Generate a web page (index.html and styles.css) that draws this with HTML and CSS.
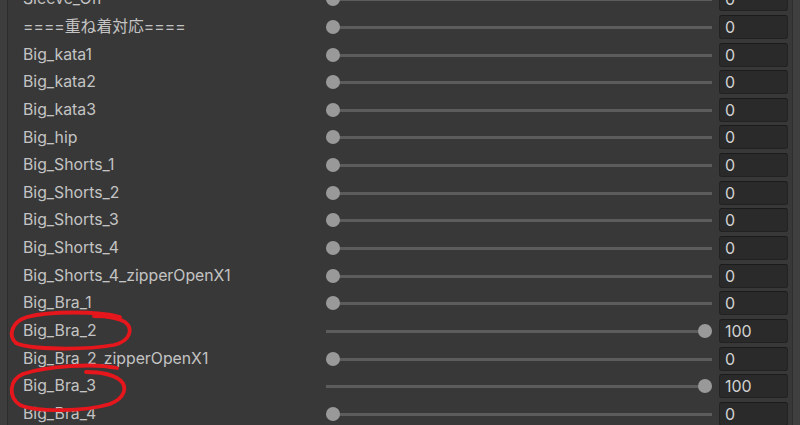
FILE: index.html
```html
<!DOCTYPE html>
<html lang="ja">

<head>
    <meta charset="UTF-8">
    <meta name="viewport" content="width=device-width, initial-scale=1.0">
    <title>Blend Shapes</title>
    <link rel="stylesheet" href="styles.css">
</head>

<body>
    <div class="inspector">
        <div class="gutter"></div>

        <div class="panel">
            <div class="list">
                <div class="row"><span class="label">Sleeve_Off</span><div class="slider"><span class="thumb"></span></div><div class="field">0</div></div>
                <div class="row"><span class="label">====重ね着対応====</span><div class="slider"><span class="thumb"></span></div><div class="field">0</div></div>
                <div class="row"><span class="label">Big_kata1</span><div class="slider"><span class="thumb"></span></div><div class="field">0</div></div>
                <div class="row"><span class="label">Big_kata2</span><div class="slider"><span class="thumb"></span></div><div class="field">0</div></div>
                <div class="row"><span class="label">Big_kata3</span><div class="slider"><span class="thumb"></span></div><div class="field">0</div></div>
                <div class="row"><span class="label">Big_hip</span><div class="slider"><span class="thumb"></span></div><div class="field">0</div></div>
                <div class="row"><span class="label">Big_Shorts_1</span><div class="slider"><span class="thumb"></span></div><div class="field">0</div></div>
                <div class="row"><span class="label">Big_Shorts_2</span><div class="slider"><span class="thumb"></span></div><div class="field">0</div></div>
                <div class="row"><span class="label">Big_Shorts_3</span><div class="slider"><span class="thumb"></span></div><div class="field">0</div></div>
                <div class="row"><span class="label">Big_Shorts_4</span><div class="slider"><span class="thumb"></span></div><div class="field">0</div></div>
                <div class="row"><span class="label">Big_Shorts_4_zipperOpenX1</span><div class="slider"><span class="thumb"></span></div><div class="field">0</div></div>
                <div class="row"><span class="label">Big_Bra_1</span><div class="slider"><span class="thumb"></span></div><div class="field">0</div></div>
                <div class="row"><span class="label">Big_Bra_2</span><div class="slider"><span class="thumb full"></span></div><div class="field">100</div></div>
                <div class="row"><span class="label">Big_Bra_2_zipperOpenX1</span><div class="slider"><span class="thumb"></span></div><div class="field">0</div></div>
                <div class="row"><span class="label">Big_Bra_3</span><div class="slider"><span class="thumb full"></span></div><div class="field">100</div></div>
                <div class="row"><span class="label">Big_Bra_4</span><div class="slider"><span class="thumb"></span></div><div class="field">0</div></div>
            </div>
        </div>

        <div class="scrollbar"></div>

        <!-- hand-drawn marks on top of the screenshot -->
        <svg class="marks" width="800" height="425" viewBox="0 0 800 425">
            <path d="M120 317 C98 311 50 311 27 317 C11 322 8 336 16 343 C30 350 86 350 114 345 C130 341 134 329 125 322 C117 317 104 316 94 316" />
            <path d="M117 368 C94 363 46 366 23 374 C9 380 8 397 20 405 C36 412 84 412 110 404 C125 398 128 387 120 380 C112 374 98 372 86 372" />
        </svg>
    </div>
</body>

</html>
```

FILE: styles.css
```css
html, body {
    margin: 0;
    padding: 0;
}

body {
    width: 800px;
    height: 425px;
    overflow: hidden;
    background-color: #383838;
    font-family: Inter, "Noto Sans CJK JP", sans-serif;
    font-size: 16px;
}

.inspector {
    position: relative;
    display: flex;
    height: 425px;
}

.gutter {
    width: 7px;
    background-color: #3d3d3d;
    border-right: 1px solid #2c2c2c;
}

.panel {
    width: 784px;
    padding-left: 15px;
    box-sizing: border-box;
    overflow: hidden;
}

.list {
    margin-top: -14.6px;
}

.row {
    display: grid;
    grid-template-columns: 296px 386px 69px;
    column-gap: 7px;
    align-items: center;
    height: 27.65px;
}

.label {
    color: #c4c4c4;
    white-space: nowrap;
    line-height: 1;
    font-size: 15.8px;
}

.slider {
    position: relative;
    height: 14px;
}

.slider::before {
    content: "";
    position: absolute;
    left: 0;
    right: 0;
    top: 6px;
    height: 3px;
    background-color: #5c5c5c;
}

.thumb {
    position: absolute;
    left: 0;
    top: 0;
    width: 14px;
    height: 14px;
    border-radius: 50%;
    background-color: #999999;
}

.thumb.full {
    left: auto;
    right: 0;
}

.field {
    height: 24px;
    box-sizing: border-box;
    padding-left: 5px;
    border: 1px solid #222222;
    border-top-color: #1b1b1b;
    border-radius: 3px;
    background-color: #2a2a2a;
    color: #d2d2d2;
    line-height: 22px;
}

.scrollbar {
    width: 8px;
    margin-left: 1px;
    background-color: #3f3f3f;
    border-left: 1px solid #2e2e2e;
    box-sizing: border-box;
}

.marks {
    position: absolute;
    left: 0;
    top: 0;
    pointer-events: none;
}

.marks path {
    fill: none;
    stroke: #e5161c;
    stroke-width: 3.8;
    stroke-linecap: round;
    stroke-linejoin: round;
}
```
